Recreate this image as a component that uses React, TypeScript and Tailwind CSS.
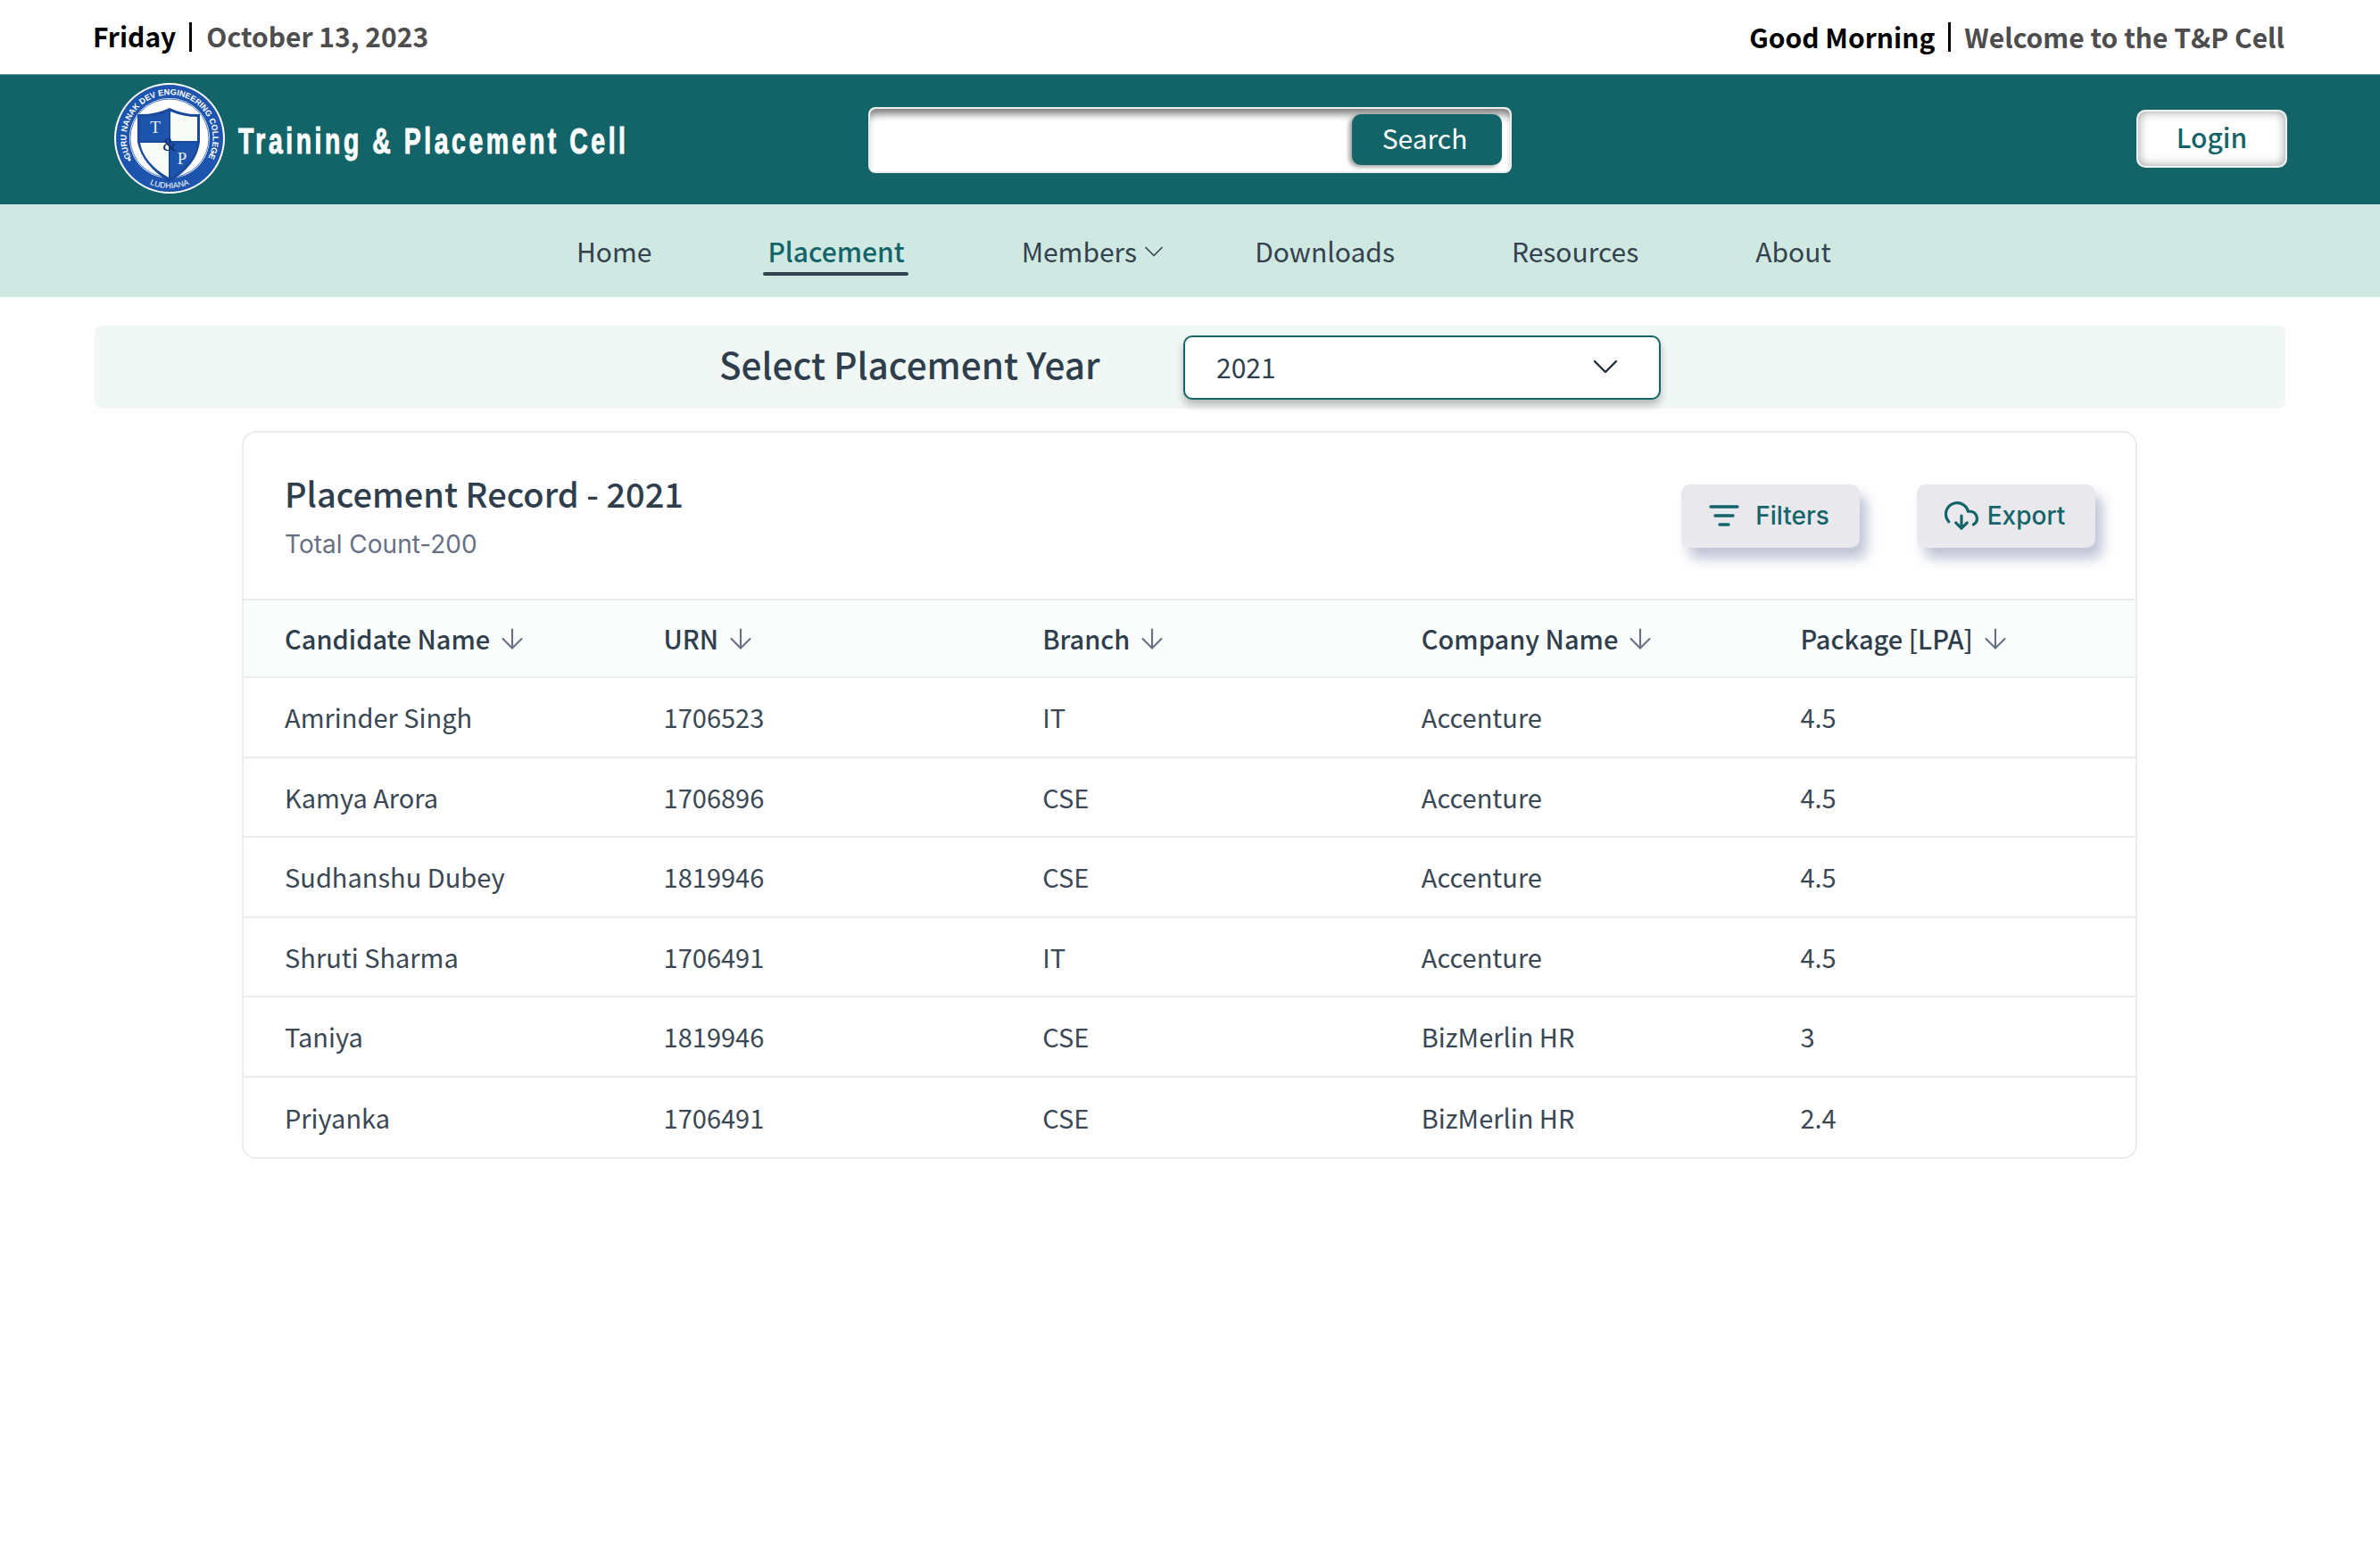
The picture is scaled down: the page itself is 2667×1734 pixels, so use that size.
import { ChevronDown, ArrowDown } from "lucide-react"

const font = "font-['Noto_Sans_CJK_SC','Noto_Sans',sans-serif]"

const rows = [
  ["Amrinder Singh", "1706523", "IT", "Accenture", "4.5"],
  ["Kamya Arora", "1706896", "CSE", "Accenture", "4.5"],
  ["Sudhanshu Dubey", "1819946", "CSE", "Accenture", "4.5"],
  ["Shruti Sharma", "1706491", "IT", "Accenture", "4.5"],
  ["Taniya", "1819946", "CSE", "BizMerlin HR", "3"],
  ["Priyanka", "1706491", "CSE", "BizMerlin HR", "2.4"],
]

const headers = ["Candidate Name", "URN", "Branch", "Company Name", "Package [LPA]"]

const Logo = () => (
  <svg viewBox="0 0 126 125" className="w-[126px] h-[125px] shrink-0 -mt-[3px]">
    <circle cx="63" cy="62" r="62" fill="#fff" />
    <circle cx="63" cy="62" r="60" fill="#1d55ae" />
    <circle cx="63" cy="62" r="45" fill="#fff" />
    <circle cx="63" cy="62" r="44" fill="none" stroke="#1d55ae" strokeWidth="0.8" />
    <defs>
      <path id="topArc" d="M 21 86 A 48.5 48.5 0 1 1 105 86" />
      <path id="botArc" d="M 27 105 A 56 56 0 0 0 99 105" />
    </defs>
    <text fill="#fff" fontSize="9.2" fontWeight="700" fontFamily="Liberation Sans, sans-serif">
      <textPath href="#topArc" startOffset="50%" textAnchor="middle">GURU NANAK DEV ENGINEERING COLLEGE</textPath>
    </text>
    <text fill="#fff" fontSize="9" fontFamily="Liberation Sans, sans-serif">
      <textPath href="#botArc" startOffset="50%" textAnchor="middle">LUDHIANA</textPath>
    </text>
    <circle cx="18" cy="86" r="1.6" fill="#fff" />
    <circle cx="111" cy="78" r="1.6" fill="#fff" />
    <path d="M27 35 Q46 36 63 28 Q80 36 97 35 L97 66 Q94 92 63 111 Q32 92 27 66 Z" fill="#1a4a9c" />
    <path d="M30 38 Q47 38 62 32 L62 65 L30 65 Z" fill="#1d55ae" />
    <path d="M64 32 Q79 38 94 38 L94 65 L64 65 Z" fill="#f6fbf6" />
    <path d="M30 67 L62 67 L62 106 Q34 90 30 67 Z" fill="#f6fbf6" />
    <path d="M64 67 L94 67 Q91 90 64 106 Z" fill="#1d55ae" />
    <text x="47" y="56" fill="#e8eef6" fontSize="19" fontFamily="Liberation Serif, serif" textAnchor="middle">T</text>
    <text x="77" y="91" fill="#e8eef6" fontSize="19" fontFamily="Liberation Serif, serif" textAnchor="middle">P</text>
    <text x="63" y="76" fill="#0d2f66" fontSize="20" fontFamily="Liberation Serif, serif" textAnchor="middle">&amp;</text>
  </svg>
)

const App = () => {
  return (
    <div className={`min-h-[1734px] bg-white ${font}`}>
      <div className="h-[83px] pl-[104px] pr-[107px] flex justify-between items-center">
        <div className="flex items-center text-[30px] font-bold leading-none">
          <span className="text-black -mt-[4px]">Friday</span>
          <span className="w-[3px] h-[33px] bg-black ml-[15px] mr-[16px]"></span>
          <span className="text-[#4d4d4d] -mt-[4px]">October 13, 2023</span>
        </div>
        <div className="flex items-center text-[30px] font-bold leading-none">
          <span className="text-black -mt-[2px]">Good Morning</span>
          <span className="w-[3px] h-[33px] bg-black mx-[15px]"></span>
          <span className="text-[#4d4d4d] -mt-[2px]">Welcome to the T&amp;P Cell</span>
        </div>
      </div>

      <div className="h-[146px] bg-[#126468] border-t border-[#5c9497] flex items-center pl-[127px] pr-[104px]">
        <Logo />
        <div className="w-[434px] ml-[14px] pt-[2px] text-white text-[40px] font-bold tracking-[5px] leading-none font-['Liberation_Sans',sans-serif] whitespace-nowrap origin-left scale-x-[0.71] [-webkit-text-stroke:1px_white]">
          Training &amp; Placement Cell
        </div>
        <div className="ml-[272px] w-[721px] h-[74px] bg-white border-2 border-[#eceeee] rounded-[8px] shadow-[inset_0_10px_8px_-4px_rgba(0,0,0,0.5)] flex justify-end items-center pr-[9px]">
          <button className="w-[168px] h-[57px] pb-[4px] pr-[5px] bg-[#126468] rounded-[10px] text-white text-[30px] shadow-[-3px_2px_5px_rgba(0,0,0,0.4)]">
            Search
          </button>
        </div>
        <button className="ml-auto w-[169px] h-[65px] pb-[5px] -mt-[2px] bg-white border-2 border-[#eef1f1] rounded-[10px] text-[#126468] text-[30px] font-medium shadow-[inset_0_0_12px_rgba(0,0,0,0.4)]">
          Login
        </button>
      </div>

      <div className="h-[104px] bg-[#d0e8e2] flex items-center pl-[646px] gap-[131px] text-[30px] text-[#33424e]">
        <span>Home</span>
        <span className="relative text-[#126468] font-medium -ml-[1px]">
          Placement
          <span className="absolute left-[-5px] right-[-4px] bottom-[-5px] h-[4px] rounded-full bg-[#33424e]"></span>
        </span>
        <span className="flex items-center gap-[1px] mr-[-36px]">
          Members <ChevronDown size={36} strokeWidth={1.1} className="mt-[2px]" />
        </span>
        <span>Downloads</span>
        <span>Resources</span>
        <span>About</span>
      </div>

      <div className="mt-[32px] mx-[106px] h-[93px] bg-[#f1f7f5] rounded-[8px] flex items-center pl-[700px]">
        <div className="w-[520px] pb-[6px] text-[40.5px] font-medium text-[#2f3e4c] leading-none whitespace-nowrap">Select Placement Year</div>
        <div className="w-[535px] h-[72px] bg-white border-2 border-[#126468] rounded-[10px] shadow-[0_6px_10px_rgba(0,0,0,0.25)] flex items-center justify-between pl-[35px] pr-[36px] pb-[1px] text-[30px] text-[#2f3e4c]">
          2021
          <ChevronDown size={48} strokeWidth={1.2} className="text-[#1f2d3a]" />
        </div>
      </div>

      <div className="mt-[25px] ml-[271px] mr-[272px] border-2 border-[#eaecf0] rounded-[16px] overflow-hidden">
        <div className="h-[186px] flex justify-between items-center pr-[45px]">
          <div className="pl-[46px]">
            <div className="text-[38px] font-medium text-[#2f3e4c] leading-[52px]">Placement Record - 2021</div>
            <div className="mt-[11px] text-[28px] text-[#667085] font-['Inter',sans-serif] leading-[40px]">Total Count-200</div>
          </div>
          <div className="flex gap-[64px] font-['Inter',sans-serif] text-[28px] text-[#126468] font-medium">
            <button className="w-[200px] h-[71px] bg-[#e9e8ed] rounded-[10px] flex items-center justify-center gap-[18px] pr-[3px] shadow-[8px_12px_14px_rgba(140,148,180,0.55)]">
              <svg viewBox="0 0 34 26" className="w-[34px] h-[26px]" fill="none" stroke="#126468" strokeWidth="3.4" strokeLinecap="round">
                <path d="M2 3H32M7 13H27M12 23H22" />
              </svg>
              Filters
            </button>
            <button className="w-[200px] h-[71px] bg-[#e9e8ed] rounded-[10px] flex items-center justify-center gap-[10px] pr-[3px] shadow-[8px_12px_14px_rgba(140,148,180,0.55)]">
              <svg viewBox="0 0 24 24" className="w-[38px] h-[38px]" fill="none" stroke="#126468" strokeWidth="2" strokeLinecap="round" strokeLinejoin="round">
                <path d="M8 17l4 4 4-4M12 12v9" />
                <path d="M20.5 18.3A5 5 0 0 0 18 9h-1.3A8 8 0 1 0 3 16.3" />
              </svg>
              Export
            </button>
          </div>
        </div>

        <div className="grid grid-cols-[repeat(5,424.6px)] h-[89px] bg-[#fafbfb] border-y-2 border-[#eaecf0] items-center text-[29px] font-medium text-[#2f3e4c]">
          {headers.map((h) => (
            <div key={h} className="flex items-center gap-[7px] pl-[46px]">
              {h}
              <ArrowDown size={36} strokeWidth={1.4} className="text-[#667085]" />
            </div>
          ))}
        </div>

        {rows.map((row, i) => (
          <div key={i} className={`grid grid-cols-[repeat(5,424.6px)] h-[89.5px] items-center text-[29px] text-[#3a4754] ${i < rows.length - 1 ? "border-b-2 border-[#eaecf0]" : ""}`}>
            {row.map((cell, j) => (
              <div key={j} className="pl-[46px]">{cell}</div>
            ))}
          </div>
        ))}
      </div>
    </div>
  )
}

export default App
